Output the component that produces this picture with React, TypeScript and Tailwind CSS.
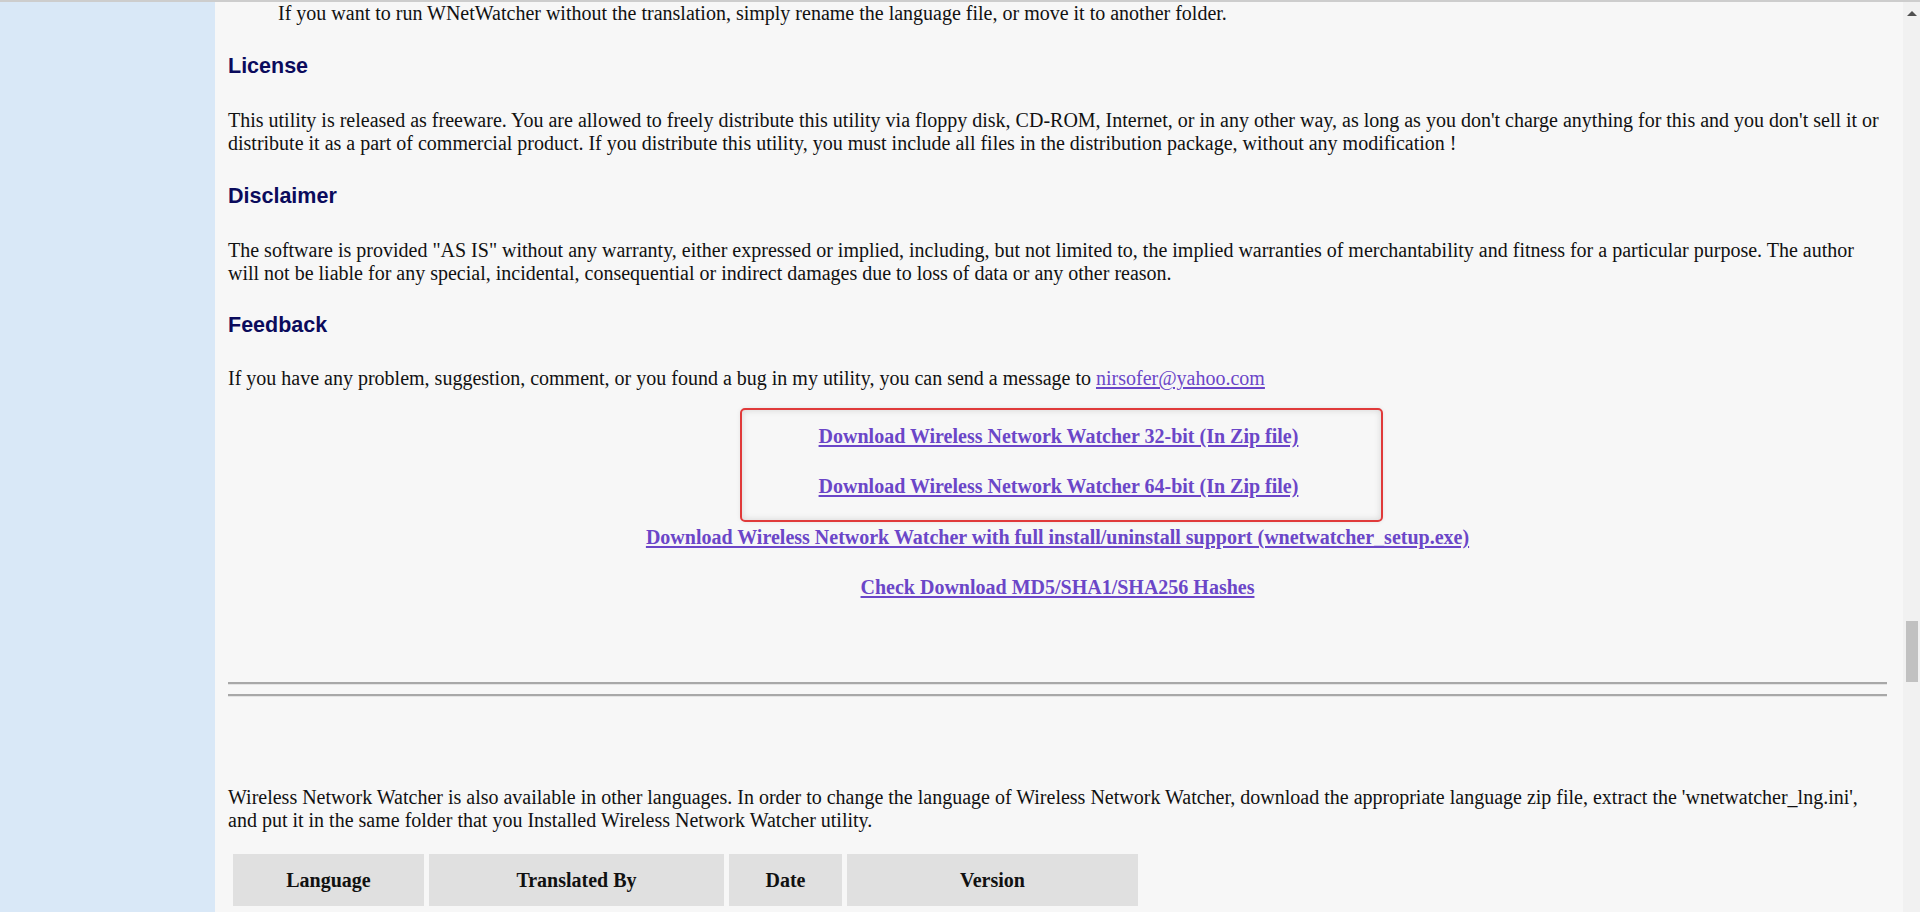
const serif = "font-['Liberation_Serif','Times_New_Roman',serif]";
const sans = "font-['Liberation_Sans',Arial,sans-serif]";

function Heading({ children, className = "" }: { children: string; className?: string }) {
  return (
    <h2 className={`${sans} text-[21.5px] leading-[25px] font-bold text-[#0b0b5c] ${className}`}>
      {children}
    </h2>
  );
}

function DlLink({ children, className = "" }: { children: string; className?: string }) {
  return (
    <p className={`text-center leading-[23px] ${className}`}>
      <a href="#" className="font-bold text-[#6b46c8] underline underline-offset-2">
        {children}
      </a>
    </p>
  );
}

function Scrollbar() {
  return (
    <div className="w-[17px] shrink-0 bg-[#f1f1f1] flex flex-col items-center">
      <div className="mt-[9px] w-0 h-0 border-l-[5px] border-r-[5px] border-b-[5px] border-l-transparent border-r-transparent border-b-[#505050]" />
      <div className="mt-[605px] w-[12px] h-[61px] bg-[#c1c1c1]" />
    </div>
  );
}

export default function App() {
  return (
    <div className={`h-[912px] overflow-hidden flex border-t-2 border-[#cdcdcd] ${serif} text-[20px] text-[#111]`}>
      <aside className="w-[215px] shrink-0 bg-[#d9e8f7]" />

      <main className="flex-1 bg-[#f7f7f7] pl-[13px] pr-[16px]">
        <p className="leading-[23px] pl-[50px]">
          If you want to run WNetWatcher without the translation, simply rename the language file, or move it to another folder.
        </p>

        <Heading className="mt-[29px]">License</Heading>
        <p className="mt-[30px] leading-[23px]">
          This utility is released as freeware. You are allowed to freely distribute this utility via floppy disk, CD-ROM, Internet, or in any other way, as long as you don't charge anything for this and you don't sell it or distribute it as a part of commercial product. If you distribute this utility, you must include all files in the distribution package, without any modification !
        </p>

        <Heading className="mt-[29px]">Disclaimer</Heading>
        <p className="mt-[30px] leading-[23px]">
          The software is provided "AS IS" without any warranty, either expressed or implied, including, but not limited to, the implied warranties of merchantability and fitness for a particular purpose. The author will not be liable for any special, incidental, consequential or indirect damages due to loss of data or any other reason.
        </p>

        <Heading className="mt-[28px]">Feedback</Heading>
        <p className="mt-[29px] leading-[23px]">
          If you have any problem, suggestion, comment, or you found a bug in my utility, you can send a message to{" "}
          <a href="#" className="text-[#6b46c8] underline underline-offset-2">nirsofer@yahoo.com</a>
        </p>

        <div className="mt-[18px] ml-[calc(50%-318px)] w-[643px] border-2 border-[#e03a3a] rounded-[5px] pt-[15px] pb-[22px] shadow-[inset_0_0_7px_rgba(0,0,0,0.14),0_0_4px_rgba(0,0,0,0.08)]">
          <DlLink className="-ml-[5px]">Download Wireless Network Watcher 32-bit (In Zip file)</DlLink>
          <DlLink className="mt-[27px] -ml-[5px]">Download Wireless Network Watcher 64-bit (In Zip file)</DlLink>
        </div>
        <DlLink className="mt-[4px]">Download Wireless Network Watcher with full install/uninstall support (wnetwatcher_setup.exe)</DlLink>
        <DlLink className="mt-[27px]">Check Download MD5/SHA1/SHA256 Hashes</DlLink>

        <div className="mt-[83px] border-t-2 border-b border-t-[#a8a8a8] border-b-[#e4e4e4]" />
        <div className="mt-[9px] border-t-2 border-b border-t-[#a8a8a8] border-b-[#e4e4e4]" />

        <p className="mt-[89px] leading-[23px]">
          Wireless Network Watcher is also available in other languages. In order to change the language of Wireless Network Watcher, download the appropriate language zip file, extract the 'wnetwatcher_lng.ini', and put it in the same folder that you Installed Wireless Network Watcher utility.
        </p>

        <div className="mt-[22px] ml-[5px] flex gap-[5px] font-bold">
          <div className="w-[191px] h-[52px] bg-[#e0e0e0] flex items-center justify-center">Language</div>
          <div className="w-[295px] h-[52px] bg-[#e0e0e0] flex items-center justify-center">Translated By</div>
          <div className="w-[113px] h-[52px] bg-[#e0e0e0] flex items-center justify-center">Date</div>
          <div className="w-[291px] h-[52px] bg-[#e0e0e0] flex items-center justify-center">Version</div>
        </div>
      </main>

      <Scrollbar />
    </div>
  );
}
